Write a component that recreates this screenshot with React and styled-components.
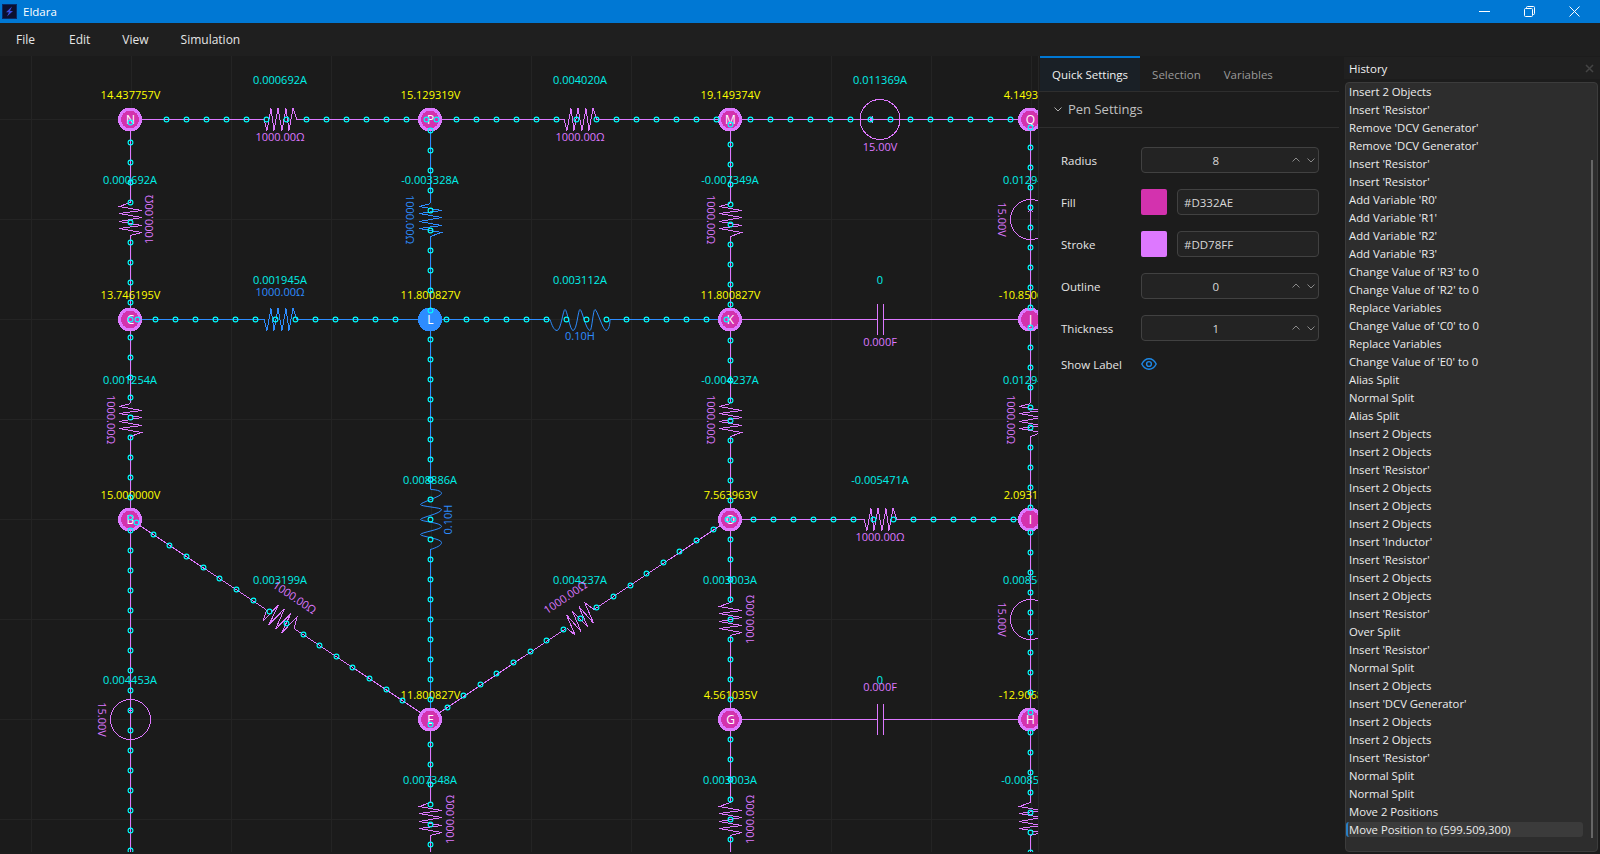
import React from "react";
import styled, { createGlobalStyle } from "styled-components";

const UI_FONT = `"Open Sans", "Noto Sans", sans-serif`;
const PURPLE = "#DD78FF";
const BLUE = "#2D8CFF";
const CYAN = "#00FFFF";

const Global = createGlobalStyle`
  html, body { margin: 0; padding: 0; height: 100%; background: #1c1c1c; overflow: hidden; }
  #root { height: 100%; }
  * { box-sizing: border-box; }
`;

const Window = styled.div`
  width: 1600px; height: 854px; display: flex; flex-direction: column;
  background: #1c1c1c; color: #e8e8e8; font-family: ${UI_FONT}; font-size: 11.5px;
`;
const TitleBar = styled.div`
  height: 23px; background: #0078d4; display: flex; align-items: center; padding-left: 2px; color: #fff; flex: none;
`;
const AppTitle = styled.span`margin-left: 6px; font-size: 11.5px; flex: 1;`;
const WinControls = styled.div`display: flex; margin-right: 20px; gap: 34px; align-items: center;`;
const MenuBar = styled.div`
  height: 33px; background: #1f1f1f; display: flex; align-items: center; flex: none; padding-bottom: 1px;
`;
const MenuItem = styled.div`
  padding: 0 16px; font-size: 12px; color: #e6e6e6;
  &:first-child { padding-right: 18px; }
`;
const Body = styled.div`flex: 1; display: flex; min-height: 0;`;
const CanvasPane = styled.div`
  width: 1039px; height: 796px; flex: none; background: #1b1b1b; overflow: hidden;
  border-right: 1px solid #262626;
`;
const Svg = styled.svg`display: block;`;
const Label = styled.text`
  font-family: ${UI_FONT}; font-size: 11px; text-anchor: middle; dominant-baseline: central; fill: ${p => p.$c};
`;
const NodeLetter = styled.text`
  font-family: ${UI_FONT}; font-size: 12px; text-anchor: middle; dominant-baseline: central; fill: #fff;
`;

const SidePanel = styled.div`width: 300px; flex: none; margin-right: 5px; display: flex; flex-direction: column;`;
const Tabs = styled.div`display: flex; height: 36px; border-bottom: 1px solid #2e2e2e; flex: none; padding-left: 1px;`;
const Tab = styled.div`
  height: 35px; display: flex; align-items: center; padding: 0 12px; font-size: 11.5px;
  color: ${p => (p.$active ? "#f0f0f0" : "#9a9a9a")};
  background: ${p => (p.$active ? "#1a2026" : "transparent")};
  border-top: 2px solid ${p => (p.$active ? "#0078d4" : "transparent")};
  &:last-child { margin-left: -1px; }
`;
const SectionHead = styled.div`
  height: 36px; display: flex; align-items: center; gap: 4px; padding-left: 13px; padding-bottom: 2px;
  border-bottom: 1px solid #2e2e2e; font-size: 13px; color: #c0c0c0; flex: none;
`;
const Form = styled.div`
  padding: 19px 20px 0 22px; display: grid; grid-template-columns: 80px 178px; grid-auto-rows: 26px; row-gap: 16px; align-items: center;
`;
const FieldLabel = styled.div`font-size: 11.5px; color: #e4e4e4;`;
const ShowRow = styled.div`
  padding: 15px 20px 0 22px; display: grid; grid-template-columns: 80px 178px; align-items: center;
`;
const Box = styled.div`
  height: 26px; border: 1px solid #414141; border-radius: 4px; background: #232323;
  display: flex; align-items: center; font-size: 11.5px; color: #d8d8d8;
`;
const Spin = styled(Box)`padding: 0 1px 0 0;`;
const SpinValue = styled.div`flex: 1; text-align: center;`;
const SpinArrows = styled.div`display: flex; gap: 3.5px; align-items: center;`;
const ColorRow = styled.div`display: flex; gap: 10px;`;
const Swatch = styled.div`width: 26px; height: 26px; border-radius: 2px; background: ${p => p.$c}; flex: none;`;
const TextBox = styled(Box)`flex: 1; padding-left: 6px;`;
const EyeWrap = styled.div`display: flex; align-items: center; height: 16px;`;

const HistoryDock = styled.div`flex: 1; display: flex; flex-direction: column; padding-bottom: 2px; min-width: 0;`;
const HistoryHead = styled.div`
  height: 22px; margin-top: 1px; background: #202020; display: flex; align-items: center; justify-content: space-between;
  padding: 0 6px 0 5px; font-size: 11.5px; color: #f0f0f0; flex: none;
`;
const HistoryList = styled.div`
  position: relative; margin: 3px 2px 0 1px; flex: 1; background: #2d2d2d; border: 1px solid #3c3c3c; border-radius: 4px; overflow: hidden;
`;
const HistoryItems = styled.div`margin-top: -1px;`;
const HistoryRow = styled.div`
  height: 18px; display: flex; align-items: center; padding-left: 3px; font-size: 11.3px; color: #ececec; white-space: nowrap;
`;
const SelectedRow = styled.div`
  height: 15px; margin: 2px 14px 0 0; display: flex; align-items: center; padding-left: 1px; font-size: 11.3px; color: #ececec;
  background: #3b3b3b; border-radius: 3px; border-left: 2px solid #2a7fc4; white-space: nowrap;
`;
const ScrollThumb = styled.div`position: absolute; right: 4px; top: 77px; bottom: 13px; width: 2px; background: #666;`;

const seq = (a, b, s = 20) => { const o = []; for (let v = a; v <= b; v += s) o.push(v); return o; };

const wires = [
  [[130.5, 119.5], [264, 119.5], PURPLE], [[297, 119.5], [564, 119.5], PURPLE], [[597, 119.5], [1030, 119.5], PURPLE],
  [[130.5, 119], [130.5, 203], PURPLE], [[130.5, 236], [130.5, 403], PURPLE], [[130.5, 436], [130.5, 854], PURPLE],
  [[430.5, 119], [430.5, 203], BLUE], [[430.5, 236], [430.5, 489], BLUE], [[430.5, 549], [430.5, 719], BLUE],
  [[430.5, 719], [430.5, 803], PURPLE], [[430.5, 836], [430.5, 854], PURPLE],
  [[730.5, 119], [730.5, 203], PURPLE], [[730.5, 236], [730.5, 403], PURPLE], [[730.5, 436], [730.5, 603], PURPLE],
  [[730.5, 636], [730.5, 803], PURPLE], [[730.5, 836], [730.5, 854], PURPLE],
  [[1030.5, 119], [1030.5, 403], PURPLE], [[1030.5, 436], [1030.5, 803], PURPLE], [[1030.5, 836], [1030.5, 854], PURPLE],
  [[130, 319.5], [264, 319.5], BLUE], [[297, 319.5], [430, 319.5], BLUE],
  [[430, 319.5], [550, 319.5], BLUE], [[610, 319.5], [730, 319.5], BLUE],
  [[730, 319.5], [877, 319.5], PURPLE], [[884, 319.5], [1030, 319.5], PURPLE],
  [[730, 519.5], [864, 519.5], PURPLE], [[897, 519.5], [1030, 519.5], PURPLE],
  [[730, 719.5], [877, 719.5], PURPLE], [[884, 719.5], [1030, 719.5], PURPLE],
  [[130, 519], [266, 609.5], PURPLE], [[294, 628.5], [430, 719], PURPLE],
  [[430, 719], [566, 628.5], PURPLE], [[594, 609.5], [730, 519], PURPLE],
];

const resistors = [
  [280, 119.5, 0, PURPLE], [580, 119.5, 0, PURPLE], [880, 519.5, 0, PURPLE], [280, 319.5, 0, BLUE],
  [130.5, 219.5, -90, PURPLE], [430.5, 219.5, 90, BLUE], [730.5, 219.5, 90, PURPLE],
  [130.5, 419.5, 90, PURPLE], [730.5, 419.5, 90, PURPLE], [1030.5, 419.5, 90, PURPLE],
  [730.5, 619.5, -90, PURPLE], [430.5, 819.5, -90, PURPLE], [730.5, 819.5, -90, PURPLE], [1030.5, 819.5, -90, PURPLE],
  [280, 619, 33.7, PURPLE], [580, 619, -33.7, PURPLE],
];
const generators = [[880, 119.5, 0], [1030.5, 219.5, 90], [1030.5, 619.5, 90], [130.5, 719.5, 90]];
const inductors = [[580, 319.5, 0], [430.5, 519.5, -90]];
const capacitors = [[880.5, 319.5], [880.5, 719.5]];

const nodes = [
  ["N", 130.5, 119.5, "14.437757V"], ["P", 430.5, 119.5, "15.129319V"], ["M", 730.5, 119.5, "19.149374V"], ["Q", 1030.5, 119.5, "4.149374V"],
  ["C", 130.5, 319.5, "13.746195V"], ["L", 430.5, 319.5, "11.800827V", true], ["K", 730.5, 319.5, "11.800827V"], ["J", 1030.5, 319.5, "-10.850600V"],
  ["B", 130.5, 519.5, "15.000000V"], ["O", 730.5, 519.5, "7.563963V"], ["I", 1030.5, 519.5, "2.093103V"],
  ["E", 430.5, 719.5, "11.800827V"], ["G", 730.5, 719.5, "4.561035V"], ["H", 1030.5, 719.5, "-12.906823V"],
];

const currents = [
  [280, 79.5, "0.000692A"], [580, 79.5, "0.004020A"], [880, 79.5, "0.011369A"],
  [130, 179.5, "0.000692A"], [430, 179.5, "-0.003328A"], [730, 179.5, "-0.007349A"], [1030, 179.5, "0.012940A"],
  [280, 279.5, "0.001945A"], [580, 279.5, "0.003112A"], [880, 279.5, "0"],
  [130, 379.5, "0.001254A"], [730, 379.5, "-0.004237A"], [1030, 379.5, "0.012940A"],
  [430, 479.5, "0.008886A"], [880, 479.5, "-0.005471A"],
  [280, 579.5, "0.003199A"], [580, 579.5, "0.004237A"], [730, 579.5, "0.003003A"], [1030, 579.5, "0.008563A"],
  [130, 679.5, "0.004453A"], [880, 679.5, "0"],
  [430, 779.5, "0.007348A"], [730, 779.5, "0.003003A"], [1030, 779.5, "-0.008563A"],
];

const values = [
  [280, 136.5, 0, "1000.00Ω", PURPLE], [580, 136.5, 0, "1000.00Ω", PURPLE], [880, 146, 0, "15.00V", PURPLE],
  [280, 291, 0, "1000.00Ω", BLUE], [580, 335.5, 0, "0.10H", BLUE], [880, 341, 0, "0.000F", PURPLE],
  [880, 536, 0, "1000.00Ω", PURPLE], [880, 686, 0, "0.000F", PURPLE],
  [148, 219.5, -90, "1000.00Ω", PURPLE], [410.5, 219.5, 90, "1000.00Ω", BLUE], [711, 219.5, 90, "1000.00Ω", PURPLE], [1002, 219.5, 90, "15.00V", PURPLE],
  [111, 419.5, 90, "1000.00Ω", PURPLE], [711, 419.5, 90, "1000.00Ω", PURPLE], [1011, 419.5, 90, "1000.00Ω", PURPLE],
  [447, 519.5, -90, "0.10H", BLUE], [749, 619.5, -90, "1000.00Ω", PURPLE], [1002, 619.5, 90, "15.00V", PURPLE],
  [102, 719.5, 90, "15.00V", PURPLE], [449, 819.5, -90, "1000.00Ω", PURPLE], [749, 819.5, -90, "1000.00Ω", PURPLE], [1049, 819.5, -90, "1000.00Ω", PURPLE],
  [295, 597, 33.7, "1000.00Ω", PURPLE], [565, 597, -33.7, "1000.00Ω", PURPLE],
];

const dots = [
  ...seq(166, 426).map(x => [x, 119.5]), ...seq(436, 716).map(x => [x, 119.5]), ...seq(750, 1010).map(x => [x, 119.5]),
  [130.5, 319.5], [137, 319.5], ...seq(155, 395).map(x => [x, 319.5]), ...seq(446, 726).map(x => [x, 319.5]),
  [727, 519.5], [733, 519.5], ...seq(753, 1013).map(x => [x, 519.5]),
  ...seq(122, 302).map(y => [130.5, y]), ...seq(337, 517).map(y => [130.5, y]), ...seq(530, 850).map(y => [130.5, y]), [136, 522],
  ...seq(130, 310).map(y => [430.5, y]), ...seq(339, 699).map(y => [430.5, y]), ...seq(724, 844).map(y => [430.5, y]),
  ...seq(124, 304).map(y => [730.5, y]), ...seq(340, 500).map(y => [730.5, y]), ...seq(539, 699).map(y => [730.5, y]), ...seq(739, 839).map(y => [730.5, y]),
  ...seq(127, 307).map(y => [1030.5, y]), ...seq(327, 507).map(y => [1030.5, y]), ...seq(532, 852).map(y => [1030.5, y]),
  ...seq(0, 15, 1).map(k => [153.3 + k * 16.64, 534.3 + k * 11.09]),
  ...seq(0, 16, 1).map(k => [447 + k * 16.64, 707 - k * 11.09]),
];

const INDUCTOR = "M-30 0C-28 6-26 11-23 11C-19 11-17-10-15-10C-13-10-10 11-7 11C-3 11-2-10 0-10C2-10 6 11 10 11C12 11 13-10 15-10C17-10 23 11 26 11C29 11 30 4 30 0";

const Circuit = () => (
  <Svg width="1039" height="796" viewBox="0 56 1039 796">
    <g stroke="#242424" strokeWidth="1" shapeRendering="crispEdges">
      {seq(31.5, 1031.5, 100).map(x => <line key={x} x1={x} x2={x} y1={56} y2={852} />)}
      {seq(119.5, 819.5, 100).map(y => <line key={y} x1={0} x2={1039} y1={y} y2={y} />)}
    </g>
    <g strokeWidth="1" fill="none" shapeRendering="crispEdges">
      {wires.map(([a, b, c], i) => <line key={i} x1={a[0]} y1={a[1]} x2={b[0]} y2={b[1]} stroke={c} />)}
      {resistors.map(([x, y, r, c], i) => (
        <polyline key={i} transform={`translate(${x} ${y}) rotate(${r})`} stroke={c}
          points="-16,0 -13,11 -9,-11 -6,11 -2,-11 2,11 6,-11 9,11 13,-11 17,0" />
      ))}
      {generators.map(([x, y, r], i) => (
        <g key={i} transform={`translate(${x} ${y}) rotate(${r})`} stroke={PURPLE}>
          <circle r="20" />
          <line x1="-20" x2="20" y1="0" y2="0" />
          <polyline points="-7,-3 -10,0 -7,3" />
        </g>
      ))}
      {capacitors.map(([x, y], i) => (
        <g key={i} transform={`translate(${x} ${y})`} stroke={PURPLE}>
          <line x1="-3" x2="-3" y1="-15.5" y2="15.5" />
          <line x1="3" x2="3" y1="-15.5" y2="15.5" />
        </g>
      ))}
    </g>
    <g fill="none" stroke={BLUE}>
      {inductors.map(([x, y, r], i) => <path key={i} d={INDUCTOR} transform={`translate(${x} ${y}) rotate(${r})`} />)}
    </g>
    <g shapeRendering="crispEdges">
      {nodes.map(([l, x, y, v, sel]) => (
        <circle key={l} cx={x - 0.5} cy={y} r="10.5" fill={sel ? BLUE : "#D332AE"} stroke={sel ? BLUE : PURPLE} strokeWidth="3" />
      ))}
    </g>
    {nodes.map(([l, x, y]) => <NodeLetter key={l} x={x} y={y}>{l}</NodeLetter>)}
    {nodes.map(([l, x, y, v]) => <Label key={l} $c="#FFFF00" x={x} y={y - 25}>{v}</Label>)}
    {currents.map(([x, y, t], i) => <Label key={i} $c="#00F0E8" x={x} y={y}>{t}</Label>)}
    {values.map(([x, y, r, t, c], i) => (
      <Label key={i} $c={c} x={x} y={y} transform={r ? `rotate(${r} ${x} ${y})` : undefined}>{t}</Label>
    ))}
    <g fill="none" stroke={CYAN} strokeWidth="1.1">
      {dots.map(([x, y], i) => <circle key={i} cx={Math.floor(x) + 0.5} cy={Math.floor(y) + 0.5} r="2.4" />)}
    </g>
  </Svg>
);

const Chev = ({ up, color = "#8a8a8a" }) => (
  <svg width={12} height={12} viewBox="0 0 12 12" fill="none" stroke={color} strokeWidth="1">
    <path d={up ? "M2.500 7.500L6 4l3.500 3.500" : "M2.500 4.500L6 8l3.500-3.500"} />
  </svg>
);

const SpinBox = ({ value }) => (
  <Spin>
    <SpinValue>{value}</SpinValue>
    <SpinArrows><Chev up /><Chev /></SpinArrows>
  </Spin>
);

const history = [
  "Insert 2 Objects", "Insert 'Resistor'", "Remove 'DCV Generator'", "Remove 'DCV Generator'", "Insert 'Resistor'", "Insert 'Resistor'",
  "Add Variable 'R0'", "Add Variable 'R1'", "Add Variable 'R2'", "Add Variable 'R3'", "Change Value of 'R3' to 0", "Change Value of 'R2' to 0",
  "Replace Variables", "Change Value of 'C0' to 0", "Replace Variables", "Change Value of 'E0' to 0", "Alias Split", "Normal Split", "Alias Split",
  "Insert 2 Objects", "Insert 2 Objects", "Insert 'Resistor'", "Insert 2 Objects", "Insert 2 Objects", "Insert 2 Objects", "Insert 'Inductor'",
  "Insert 'Resistor'", "Insert 2 Objects", "Insert 2 Objects", "Insert 'Resistor'", "Over Split", "Insert 'Resistor'", "Normal Split",
  "Insert 2 Objects", "Insert 'DCV Generator'", "Insert 2 Objects", "Insert 2 Objects", "Insert 'Resistor'", "Normal Split", "Normal Split", "Move 2 Positions",
];

export default function App() {
  return (
    <Window>
      <Global />
      <TitleBar>
        <svg width="15" height="15" viewBox="0 0 15 15">
          <rect x="0.5" y="0.5" width="14" height="14" fill="#0c1030" stroke="#0b2a66" />
          <path d="M10 2.500L4 8.200h3L5 12.500l6-5.400H8z" fill="#3b4fe0" />
        </svg>
        <AppTitle>Eldara</AppTitle>
        <WinControls>
          <svg width="11" height="11" viewBox="0 0 11 11" stroke="#fff" fill="none"><path d="M0 5.500h11" /></svg>
          <svg width="11" height="11" viewBox="0 0 11 11" stroke="#fff" fill="none"><rect x="0.5" y="2.500" width="8" height="8" rx="1" /><path d="M2.500 2.500V1.500a1 1 0 0 1 1-1h6a1 1 0 0 1 1 1v6a1 1 0 0 1-1 1h-1" /></svg>
          <svg width="11" height="11" viewBox="0 0 11 11" stroke="#fff" fill="none"><path d="M.5.500l10 10M10.500.500l-10 10" /></svg>
        </WinControls>
      </TitleBar>
      <MenuBar>
        {["File", "Edit", "View", "Simulation"].map(m => <MenuItem key={m}>{m}</MenuItem>)}
      </MenuBar>
      <Body>
        <CanvasPane><Circuit /></CanvasPane>
        <SidePanel>
          <Tabs>
            <Tab $active>Quick Settings</Tab>
            <Tab>Selection</Tab>
            <Tab>Variables</Tab>
          </Tabs>
          <SectionHead><Chev color="#b0b0b0" />Pen Settings</SectionHead>
          <Form>
            <FieldLabel>Radius</FieldLabel><SpinBox value="8" />
            <FieldLabel>Fill</FieldLabel>
            <ColorRow><Swatch $c="#D332AE" /><TextBox>#D332AE</TextBox></ColorRow>
            <FieldLabel>Stroke</FieldLabel>
            <ColorRow><Swatch $c="#DD78FF" /><TextBox>#DD78FF</TextBox></ColorRow>
            <FieldLabel>Outline</FieldLabel><SpinBox value="0" />
            <FieldLabel>Thickness</FieldLabel><SpinBox value="1" />
          </Form>
          <ShowRow>
            <FieldLabel>Show Label</FieldLabel>
            <EyeWrap>
              <svg width="16" height="14" viewBox="0 0 16 14" fill="none" stroke="#1e88e5" strokeWidth="1.4">
                <path d="M.8 7C2.500 3.600 5 1.800 8 1.800s5.500 1.800 7.200 5.200C13.500 10.400 11 12.200 8 12.200S2.500 10.400.8 7z" />
                <circle cx="8" cy="7" r="2.400" />
              </svg>
            </EyeWrap>
          </ShowRow>
        </SidePanel>
        <HistoryDock>
          <HistoryHead>
            History
            <svg width="9" height="9" viewBox="0 0 9 9" stroke="#444" strokeWidth="1.500"><path d="M1 1l7 7M8 1l-7 7" /></svg>
          </HistoryHead>
          <HistoryList>
            <HistoryItems>
              {history.map((h, i) => <HistoryRow key={i}>{h}</HistoryRow>)}
              <SelectedRow>Move Position to (599.509,300)</SelectedRow>
            </HistoryItems>
            <ScrollThumb />
          </HistoryList>
        </HistoryDock>
      </Body>
    </Window>
  );
}
